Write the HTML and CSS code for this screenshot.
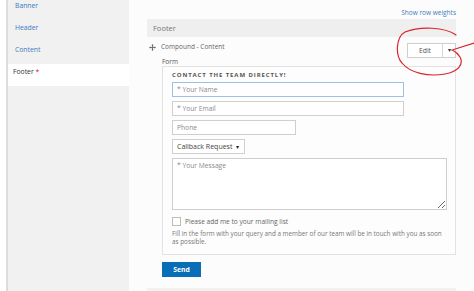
FILE: index.html
```html
<!DOCTYPE html>
<html lang="en">
<head>
<meta charset="UTF-8">
<meta name="viewport" content="width=device-width, initial-scale=1.0">
<title>Layout - Footer</title>
<link rel="stylesheet" href="styles.css">
</head>
<body>
<div class="sidebar">
  <ul class="nav">
    <li class="nav-item">Banner</li>
    <li class="nav-item">Header</li>
    <li class="nav-item">Content</li>
    <li class="nav-item active">Footer <span class="req">*</span></li>
  </ul>
</div>

<div class="main">
  <div class="toolbar"><a href="#">Show row weights</a></div>

  <div class="region-head">Footer</div>

  <div class="block-row">
    <div class="block-title">
      <svg class="move" width="7" height="7" viewBox="0 0 14 14">
        <path d="M7 0 L9.5 3 H8 V6 H11 V4.5 L14 7 L11 9.5 V8 H8 V11 H9.5 L7 14 L4.5 11 H6 V8 H3 V9.5 L0 7 L3 4.5 V6 H6 V3 H4.5 Z" fill="#6f6f6f"/>
      </svg>
      Compound - Content
    </div>
    <div class="edit-btn">
      <span class="edit-main">Edit</span>
      <span class="edit-caret">&#9662;</span>
    </div>
  </div>

  <div class="form-label">Form</div>

  <div class="fieldset">
    <div class="form-title">CONTACT THE TEAM DIRECTLY!</div>
    <input class="field name" type="text" placeholder="* Your Name">
    <input class="field email" type="text" placeholder="* Your Email">
    <input class="field phone" type="text" placeholder="Phone">
    <div class="select">Callback Request <span class="sel-caret">&#9662;</span></div>
    <textarea class="field message" placeholder="* Your Message"></textarea>
    <div class="check-row">
      <span class="check"></span>
      Please add me to your mailing list
    </div>
    <p class="help">Fill in the form with your query and a member of our team will be in touch with you as soon as possible.</p>
  </div>

  <button class="send">Send</button>

  <div class="next-region"></div>
</div>

<!-- hand drawn annotation round the edit button -->
<svg class="scribble" width="84" height="60" viewBox="0 0 84 60">
  <path d="M66 15 C55 7 30 6 15 12 C6 17 5 35 12 43 C20 53 38 57 55 54 C68 52 74 44 70 37 C67 32 64 31 62 30 L84 23" fill="none" stroke="#d8262b" stroke-width="1.2" stroke-linecap="round"/>
</svg>
</body>
</html>
```

FILE: styles.css
```css
body {
  margin: 0;
  height: 291px;
  overflow: hidden;
  display: flex;
  font-family: "Open Sans", "Liberation Sans", sans-serif;
  background-color: #fff;
  position: relative;
}
.sidebar {
  margin-left: 6px;
  width: 122px;
  border-left: 2px solid #dcdcdc;
  background-color: #f1f1f1;
}
.nav {
  list-style: none;
  margin: -2px 0 0 0;
  padding: 0;
}
.nav-item {
  height: 22px;
  box-sizing: border-box;
  padding: 2px 0 0 7px;
  line-height: 12px;
  font-size: 6.8px;
  color: #3b7cbf;
}
.nav-item.active {
  background-color: #fff;
  color: #333;
  padding-left: 5px;
}
.req {
  color: #e0141e;
}
.main {
  flex: 1;
  padding: 0 18px;
  background-color: #fcfcfc;
}
.toolbar {
  height: 19px;
  box-sizing: border-box;
  padding-top: 9px;
  text-align: right;
  line-height: 8px;
  font-size: 6.5px;
}
.toolbar a {
  color: #3b7cbf;
  text-decoration: none;
}
.region-head {
  height: 18px;
  line-height: 18px;
  padding-left: 6px;
  background-color: #efefef;
  font-size: 7.5px;
  color: #777;
}
.block-row {
  display: flex;
  justify-content: space-between;
  align-items: flex-start;
  padding-top: 6px;
}
.block-title {
  display: flex;
  align-items: center;
  gap: 5px;
  padding-left: 2px;
  line-height: 8px;
  font-size: 6.5px;
  color: #666;
}
.edit-btn {
  display: flex;
  height: 15px;
  box-sizing: border-box;
  border: 1px solid #cfcfcf;
  background-color: #fff;
  font-size: 6.8px;
  color: #555;
  line-height: 13px;
}
.edit-main {
  width: 34px;
  text-align: center;
  border-right: 1px solid #d8d8d8;
}
.edit-caret {
  width: 12px;
  text-align: center;
  font-size: 6px;
  color: #333;
}
.form-label {
  padding-left: 15px;
  line-height: 8px;
  font-size: 6.5px;
  color: #555;
}
.fieldset {
  margin-left: 15px;
  border: 1px solid #e2e2e2;
  background-color: #fdfdfd;
  padding: 4px 8px 8px 9px;
  display: flex;
  flex-direction: column;
  align-items: flex-start;
}
.form-title {
  line-height: 8px;
  font-size: 6px;
  font-weight: bold;
  letter-spacing: 0.9px;
  color: #555;
  margin-bottom: 3px;
}
.field {
  box-sizing: border-box;
  height: 15px;
  margin: 0 0 4px 0;
  padding: 0 4px;
  border: 1px solid #cfcfcf;
  border-radius: 0;
  background-color: #fff;
  font-family: "Open Sans", "Liberation Sans", sans-serif;
  font-size: 6.7px;
  color: #555;
  outline: none;
}
.field::placeholder {
  color: #8a8a8a;
}
.name {
  width: 232px;
  border-color: #9ec0e4;
}
.email {
  width: 232px;
}
.phone {
  width: 124px;
}
.select {
  box-sizing: border-box;
  width: 73px;
  height: 15px;
  margin-bottom: 4px;
  padding-left: 4px;
  border: 1px solid #cfcfcf;
  background-color: #fff;
  line-height: 13px;
  font-size: 7px;
  color: #444;
}
.sel-caret {
  margin-left: 2px;
  font-size: 5.5px;
  color: #222;
}
.message {
  width: 275px;
  height: 52px;
  padding-top: 2px;
  margin-bottom: 7px;
  resize: vertical;
}
.check-row {
  display: flex;
  align-items: center;
  gap: 4px;
  font-size: 6.6px;
  line-height: 9px;
  color: #666;
}
.check {
  width: 9px;
  height: 9px;
  box-sizing: border-box;
  border: 1px solid #bdbdbd;
  background-color: #fff;
}
.help {
  margin: 4px 0 0 0;
  line-height: 8px;
  font-size: 6.35px;
  color: #777;
}
.send {
  display: block;
  margin: 7px 0 0 15px;
  width: 39px;
  height: 15px;
  padding: 0;
  border: none;
  border-radius: 0;
  background-color: #0a6eb6;
  color: #fff;
  font-family: "Open Sans", "Liberation Sans", sans-serif;
  font-weight: bold;
  font-size: 6.8px;
}
.next-region {
  margin-top: 11px;
  height: 3px;
  background-color: #f1f1f1;
}
.scribble {
  position: absolute;
  left: 390px;
  top: 20px;
}
```
